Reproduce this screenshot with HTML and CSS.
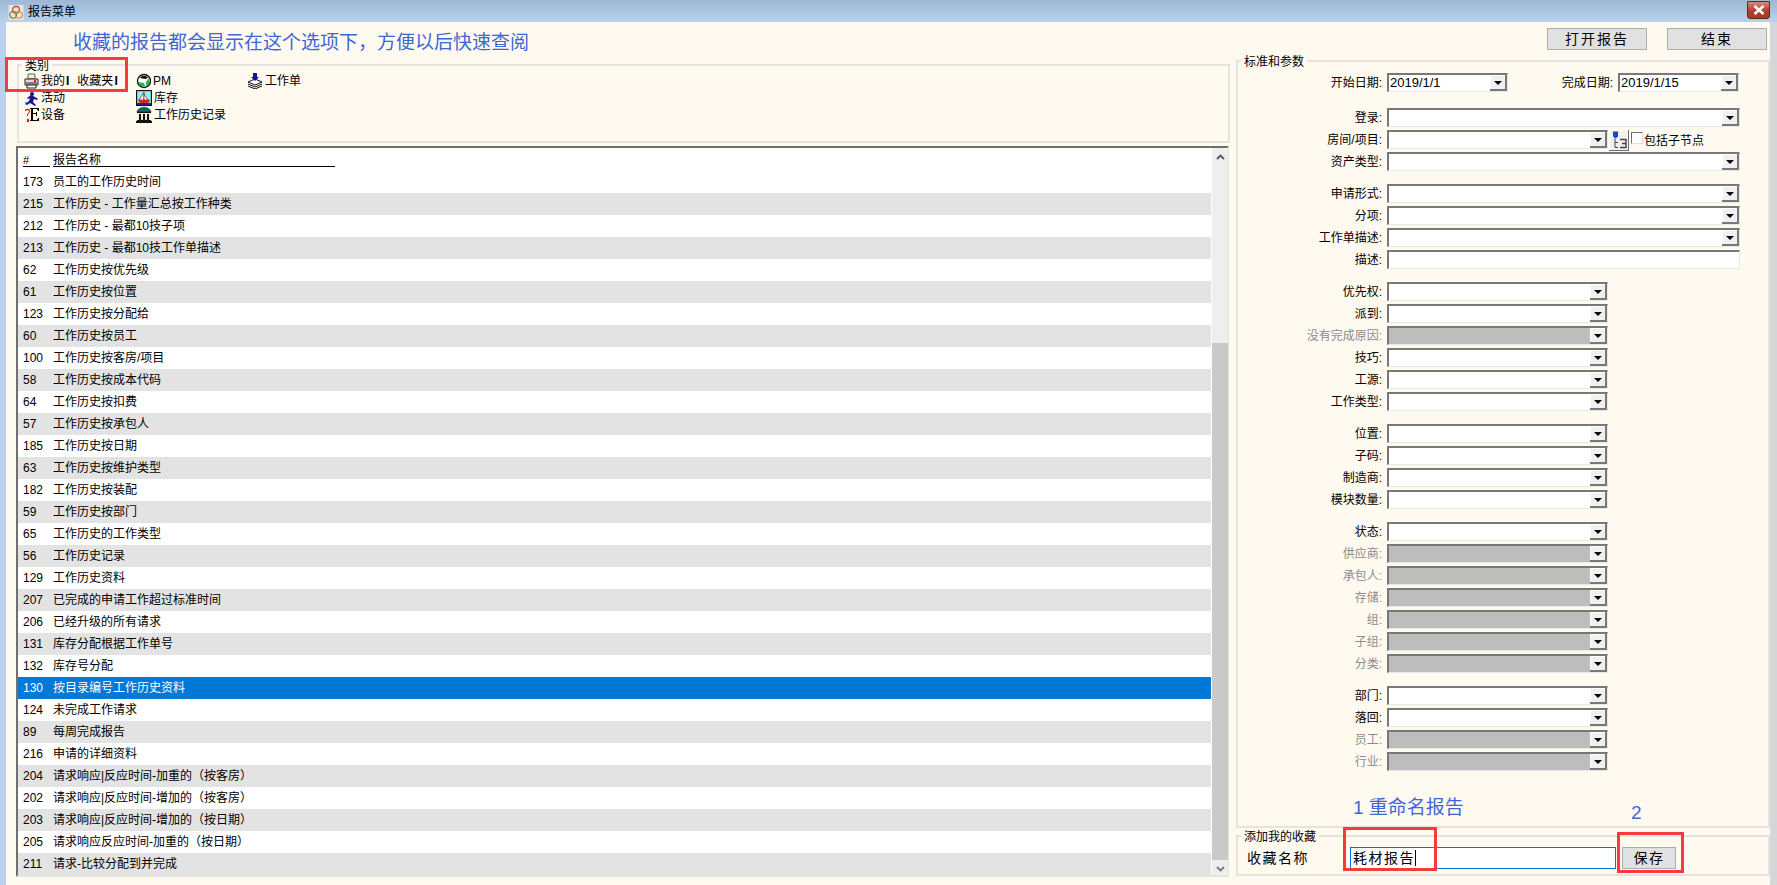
FILE: index.html
```html
<!DOCTYPE html>
<html lang="zh-CN">
<head>
<meta charset="utf-8">
<title>报告菜单</title>
<link rel="stylesheet" href="styles.css">
</head>
<body>
<div class="app">
  <header class="titlebar">
    <svg class="app-icon" viewBox="0 0 16 16" width="16" height="15"><rect width="16" height="16" fill="#e8e4dc"/><circle cx="8" cy="5" r="3.6" fill="none" stroke="#c0392b" stroke-width="1.2"/><circle cx="5" cy="10.5" r="3.6" fill="none" stroke="#5a8a3a" stroke-width="1.2"/><circle cx="11" cy="10.5" r="3.6" fill="none" stroke="#c79a2b" stroke-width="1.2"/></svg>
    <span class="title-text">报告菜单</span>
    <span class="close-btn"><svg viewBox="0 0 12 10" width="12" height="10"><path d="M1.5 1 L10.5 9 M10.5 1 L1.5 9" stroke="#fff" stroke-width="2.6"/></svg></span>
  </header>
  <div class="window">
    <main class="content">
      <section class="left">
        <fieldset class="box category">
          <legend>类别</legend>
          <div class="cat-grid">
            <div class="cat-item"><svg class="ico" viewBox="0 0 15 16"><path d="M4 1h7v5H4z" fill="#f2efc8" stroke="#666"/><path d="M1 6h13v6H1z" fill="#ddd" stroke="#222"/><path d="M3 12h9v3H3z" fill="#fff" stroke="#222"/><rect x="10" y="7" width="2" height="2" fill="#e11"/><path d="M2 10h11" stroke="#222"/></svg><span>我的<b class="bar">I</b><span class="favname">收藏夹</span><b class="bar">I</b></span></div>
            <div class="cat-item"><svg class="ico" viewBox="0 0 15 16"><path d="M6 0h5v2H6z" fill="#b11"/><circle cx="8" cy="4" r="2" fill="#14148c"/><path d="M3 8l4-3 4 2 3 2-1 1-3-1-1 3 3 3-1 1-5-3-3 2-2-1 4-3 1-3-2 1z" fill="#14148c"/><path d="M1 12h3v1H1z" fill="#2a8ad4"/></svg><span>活动</span></div>
            <div class="cat-item"><svg class="ico" viewBox="0 0 15 16"><path d="M6 1h9v3h-1l-1-2H9v4h3V5h1v4h-1V7H9v6h4l1-2h1v3H6v-1h1V2H6z" fill="#000"/><path d="M1 4c0-3 5-3 5 0 0 2-2 2-2 5H3c0-3 2-3 2-5 0-1-3-1-3 0z" fill="#e01010"/><rect x="3" y="12" width="2" height="3" fill="#e01010"/></svg><span>设备</span></div>
            <div class="cat-item"><svg class="ico" viewBox="0 0 15 16"><circle cx="8" cy="8" r="6.5" fill="#fff" stroke="#111" stroke-width="1.4"/><path d="M4 5c2-3 6-3 8 0l-3 1z" fill="#111"/><path d="M2 9l3 4 4 0-1-3z" fill="#19b84a"/><path d="M13 5l1 5-4 3 0-4z" fill="#19b84a"/></svg><span class="latin">PM</span></div>
            <div class="cat-item"><svg class="ico wide" viewBox="0 0 16 16"><rect x=".5" y=".5" width="15" height="15" fill="#5fd3d8" stroke="#111"/><path d="M2 2h12v7H2z" fill="#a6e8ea"/><path d="M8 2v8H3z" fill="#fff" stroke="#111" stroke-width=".6"/><path d="M8 4l4 6H8z" fill="#fff" stroke="#111" stroke-width=".6"/><path d="M2 10h12l-2 3H4z" fill="#d22"/><path d="M1 13h14v2H1z" fill="#1a2a9c"/></svg><span>库存</span></div>
            <div class="cat-item"><svg class="ico wide" viewBox="0 0 16 16"><path d="M1 5c1-6 13-6 14 0z" fill="#0f6a6a" stroke="#111" stroke-width=".6"/><path d="M1 5h14v1H1zM1 13h14v1H1zM0 14h16v2H0z" fill="#111"/><path d="M2 6h12v7H2z" fill="#f4f0d0"/><path d="M3 7h2v6H3zM7 7h2v6H7zM11 7h2v6h-2z" fill="#111"/></svg><span>工作历史记录</span></div>
            <div class="cat-item"><svg class="ico wide" viewBox="0 0 16 16"><path d="M8 6l7 3-7 3-7-3z" fill="#fff" stroke="#111"/><path d="M1 11l7 3 7-3M1 13l7 3 7-3" fill="none" stroke="#111"/><path d="M6 0h4v4h2l-4 4-4-4h2z" fill="#14148c"/></svg><span>工作单</span></div>
          </div>
        </fieldset>
        <div class="list">
          <div class="list-body">
            <div class="list-head"><span class="head-num">#</span><span class="head-name">报告名称</span></div>
            <div class="row"><span class="num">173</span><span>员工的工作历史时间</span></div>
            <div class="row alt"><span class="num">215</span><span>工作历史 - 工作量汇总按工作种类</span></div>
            <div class="row"><span class="num">212</span><span>工作历史 - 最都10技子项</span></div>
            <div class="row alt"><span class="num">213</span><span>工作历史 - 最都10技工作单描述</span></div>
            <div class="row"><span class="num">62</span><span>工作历史按优先级</span></div>
            <div class="row alt"><span class="num">61</span><span>工作历史按位置</span></div>
            <div class="row"><span class="num">123</span><span>工作历史按分配给</span></div>
            <div class="row alt"><span class="num">60</span><span>工作历史按员工</span></div>
            <div class="row"><span class="num">100</span><span>工作历史按客房/项目</span></div>
            <div class="row alt"><span class="num">58</span><span>工作历史按成本代码</span></div>
            <div class="row"><span class="num">64</span><span>工作历史按扣费</span></div>
            <div class="row alt"><span class="num">57</span><span>工作历史按承包人</span></div>
            <div class="row"><span class="num">185</span><span>工作历史按日期</span></div>
            <div class="row alt"><span class="num">63</span><span>工作历史按维护类型</span></div>
            <div class="row"><span class="num">182</span><span>工作历史按装配</span></div>
            <div class="row alt"><span class="num">59</span><span>工作历史按部门</span></div>
            <div class="row"><span class="num">65</span><span>工作历史的工作类型</span></div>
            <div class="row alt"><span class="num">56</span><span>工作历史记录</span></div>
            <div class="row"><span class="num">129</span><span>工作历史资料</span></div>
            <div class="row alt"><span class="num">207</span><span>已完成的申请工作超过标准时间</span></div>
            <div class="row"><span class="num">206</span><span>已经升级的所有请求</span></div>
            <div class="row alt"><span class="num">131</span><span>库存分配根据工作单号</span></div>
            <div class="row"><span class="num">132</span><span>库存号分配</span></div>
            <div class="row selected"><span class="num">130</span><span>按目录编号工作历史资料</span></div>
            <div class="row"><span class="num">124</span><span>未完成工作请求</span></div>
            <div class="row alt"><span class="num">89</span><span>每周完成报告</span></div>
            <div class="row"><span class="num">216</span><span>申请的详细资料</span></div>
            <div class="row alt"><span class="num">204</span><span>请求响应|反应时间-加重的（按客房）</span></div>
            <div class="row"><span class="num">202</span><span>请求响应|反应时间-增加的（按客房）</span></div>
            <div class="row alt"><span class="num">203</span><span>请求响应|反应时间-增加的（按日期）</span></div>
            <div class="row"><span class="num">205</span><span>请求响应反应时间-加重的（按日期）</span></div>
            <div class="row alt"><span class="num">211</span><span>请求-比较分配到并完成</span></div>
          </div>
          <div class="scrollbar">
            <div class="scroll-btn"><svg viewBox="0 0 9 6" width="9" height="6"><path d="M1 5l3.5-3.500L8 5" fill="none" stroke="#555" stroke-width="1.8"/></svg></div>
            <div class="scroll-gap"></div>
            <div class="scroll-thumb"></div>
            <div class="scroll-btn end"><svg viewBox="0 0 9 6" width="9" height="6"><path d="M1 1l3.500 3.500L8 1" fill="none" stroke="#777" stroke-width="1.8"/></svg></div>
          </div>
        </div>
      </section>

      <section class="right">
        <div class="actions">
          <button class="btn">打开报告</button>
          <button class="btn">结束</button>
        </div>
        <fieldset class="box params">
          <legend>标准和参数</legend>
          <div class="group first">
            <div class="frow">
              <label class="lbl">开始日期:</label>
              <div class="field date"><span class="val">2019/1/1</span><span class="arrow"></span></div>
              <label class="lbl short">完成日期:</label>
              <div class="field date"><span class="val">2019/1/15</span><span class="arrow"></span></div>
            </div>
          </div>
          <div class="group">
            <div class="frow"><label class="lbl">登录:</label><div class="field long"><span class="val"></span><span class="arrow"></span></div></div>
            <div class="frow"><label class="lbl">房间/项目:</label><div class="field"><span class="val"></span><span class="arrow"></span></div>
              <span class="tree-btn"><svg viewBox="0 0 18 18" width="18" height="19"><path d="M3 0h5v5l-2.500 2L3 5z" fill="#2040d0"/><path d="M5 7v9h3M5 11h3" fill="none" stroke="#444"/><path d="M10 8h6v8h-6M12 12h4" fill="none" stroke="#444" stroke-width="1.400"/></svg></span>
              <span class="check"></span><span class="check-text">包括子节点</span>
            </div>
            <div class="frow"><label class="lbl">资产类型:</label><div class="field long"><span class="val"></span><span class="arrow"></span></div></div>
          </div>
          <div class="group">
            <div class="frow"><label class="lbl">申请形式:</label><div class="field long"><span class="val"></span><span class="arrow"></span></div></div>
            <div class="frow"><label class="lbl">分项:</label><div class="field long"><span class="val"></span><span class="arrow"></span></div></div>
            <div class="frow"><label class="lbl">工作单描述:</label><div class="field long"><span class="val"></span><span class="arrow"></span></div></div>
            <div class="frow"><label class="lbl">描述:</label><div class="field long"><span class="val"></span></div></div>
          </div>
          <div class="group">
            <div class="frow"><label class="lbl">优先权:</label><div class="field"><span class="val"></span><span class="arrow"></span></div></div>
            <div class="frow"><label class="lbl">派到:</label><div class="field"><span class="val"></span><span class="arrow"></span></div></div>
            <div class="frow off"><label class="lbl">没有完成原因:</label><div class="field"><span class="val"></span><span class="arrow"></span></div></div>
            <div class="frow"><label class="lbl">技巧:</label><div class="field"><span class="val"></span><span class="arrow"></span></div></div>
            <div class="frow"><label class="lbl">工源:</label><div class="field"><span class="val"></span><span class="arrow"></span></div></div>
            <div class="frow"><label class="lbl">工作类型:</label><div class="field"><span class="val"></span><span class="arrow"></span></div></div>
          </div>
          <div class="group">
            <div class="frow"><label class="lbl">位置:</label><div class="field"><span class="val"></span><span class="arrow"></span></div></div>
            <div class="frow"><label class="lbl">子码:</label><div class="field"><span class="val"></span><span class="arrow"></span></div></div>
            <div class="frow"><label class="lbl">制造商:</label><div class="field"><span class="val"></span><span class="arrow"></span></div></div>
            <div class="frow"><label class="lbl">模块数量:</label><div class="field"><span class="val"></span><span class="arrow"></span></div></div>
          </div>
          <div class="group">
            <div class="frow"><label class="lbl">状态:</label><div class="field"><span class="val"></span><span class="arrow"></span></div></div>
            <div class="frow off"><label class="lbl">供应商:</label><div class="field"><span class="val"></span><span class="arrow"></span></div></div>
            <div class="frow off"><label class="lbl">承包人:</label><div class="field"><span class="val"></span><span class="arrow"></span></div></div>
            <div class="frow off"><label class="lbl">存储:</label><div class="field"><span class="val"></span><span class="arrow"></span></div></div>
            <div class="frow off"><label class="lbl">组:</label><div class="field"><span class="val"></span><span class="arrow"></span></div></div>
            <div class="frow off"><label class="lbl">子组:</label><div class="field"><span class="val"></span><span class="arrow"></span></div></div>
            <div class="frow off"><label class="lbl">分类:</label><div class="field"><span class="val"></span><span class="arrow"></span></div></div>
          </div>
          <div class="group">
            <div class="frow"><label class="lbl">部门:</label><div class="field"><span class="val"></span><span class="arrow"></span></div></div>
            <div class="frow"><label class="lbl">落回:</label><div class="field"><span class="val"></span><span class="arrow"></span></div></div>
            <div class="frow off"><label class="lbl">员工:</label><div class="field"><span class="val"></span><span class="arrow"></span></div></div>
            <div class="frow off"><label class="lbl">行业:</label><div class="field"><span class="val"></span><span class="arrow"></span></div></div>
          </div>
        </fieldset>
        <fieldset class="box favorite">
          <legend>添加我的收藏</legend>
          <div class="fav-row">
            <span class="fav-label">收藏名称</span>
            <div class="fav-input"><span class="caret">耗材报告</span></div>
            <button class="btn save">保存</button>
          </div>
        </fieldset>
      </section>
    </main>
    <div class="edge"></div>
  </div>

  <p class="note note-top">收藏的报告都会显示在这个选项下，方便以后快速查阅</p>
  <p class="note note-rename">1 重命名报告</p>
  <p class="note note-two">2</p>
  <div class="mark mark-cat"></div>
  <div class="mark mark-input"></div>
  <div class="mark mark-save"></div>
</div>
</body>
</html>
```
FILE: styles.css
```css
* { box-sizing: border-box; }
html, body { margin: 0; padding: 0; }
body {
  width: 1777px;
  height: 885px;
  overflow: hidden;
  font-family: "Liberation Sans", "Noto Sans CJK SC", sans-serif;
  font-size: 12px;
  color: #000;
  background: #b9d1ea;
}
.app { position: relative; width: 1777px; height: 885px; display: flex; flex-direction: column; }

.titlebar {
  height: 22px;
  flex: none;
  display: flex;
  align-items: center;
  padding-left: 8px;
  padding-right: 7px;
  background: linear-gradient(#9db8d4, #b9d2ec);
}
.app-icon { flex: none; margin-top: 2px; }
.title-text { margin-left: 4px; font-size: 12px; line-height: 14px; margin-top: 2px; }
.close-btn {
  margin-left: auto;
  width: 23px;
  height: 18px;
  align-self: flex-start;
  margin-top: 1px;
  background: linear-gradient(#d58a7c, #b0402f 55%, #a73a2a);
  border: 1px solid #5c2a25;
  border-radius: 0 0 3px 3px;
  display: flex;
  align-items: center;
  justify-content: center;
}

.window { flex: 1; display: flex; padding-left: 6px; min-height: 0; }
.content { width: 1764px; background: #fffaf0; display: flex; }
.edge { flex: 1; background: #d4d6d8; }

.left { width: 1213px; margin-left: 10px; padding-top: 36px; flex: none; }
.right { width: 534px; margin-left: 7px; flex: none; padding-top: 6px; }

.box {
  margin: 0;
  padding: 0;
  border: 2px solid #e5e3dd;
  min-width: 0;
}
.box legend {
  position: relative;
  top: 1px;
  padding: 0 3px;
  margin-left: 3px;
  font-size: 12px;
  line-height: 14px;
}

.category { height: 85px; margin-left: 1px; margin-right: -1px; width: 1213px; }
.cat-grid {
  display: grid;
  grid-template-rows: repeat(3, 17px);
  grid-auto-flow: column;
  grid-template-columns: 112px 111px 1fr;
  padding-left: 5px;
}
.cat-item { display: flex; align-items: center; line-height: 14px; white-space: pre; }
.ico { width: 15px; height: 16px; margin-right: 2px; flex: none; }
.ico.wide { width: 16px; margin-right: 2px; }
.bar { font-weight: bold; margin-left: 1px; }
.favname { margin-left: 8px; }
.latin { font-size: 12px; }

.list {
  margin-top: 3px;
  width: 1213px;
  height: 731px;
  display: flex;
  border-top: 2px solid #707070;
  border-left: 2px solid #707070;
  border-right: 2px solid #e4e4e4;
  border-bottom: 2px solid #e4e4e4;
  background: #fff;
}
.list-body { width: 1193px; flex: none; overflow: hidden; }
.list-head { height: 23px; display: flex; padding: 2px 0 0 5px; align-items: flex-start; }
.head-num { width: 27px; height: 17px; border-bottom: 1px solid #000; line-height: 20px; font-size: 11px; }
.head-name { margin-left: 3px; width: 282px; height: 17px; border-bottom: 1px solid #000; line-height: 20px; }
.row { height: 22px; display: flex; align-items: center; padding-left: 5px; white-space: nowrap; line-height: 14px; }
.row.alt { background: #e3e3e3; }
.row.selected { background: #0078d7; color: #fff; }
.num { width: 30px; flex: none; }

.scrollbar {
  width: 16px;
  margin-left: 1px;
  flex: none;
  background: #eeeeee;
  display: flex;
  flex-direction: column;
}
.scroll-btn { height: 17px; display: flex; align-items: center; justify-content: center; flex: none; }
.scroll-btn.end { flex: 1; align-items: flex-end; padding-bottom: 3px; }
.scroll-gap { height: 178px; flex: none; }
.scroll-thumb { height: 517px; flex: none; background: #c9c9c9; }

.actions { display: flex; justify-content: flex-end; gap: 20px; height: 22px; padding-right: 3px; }
.btn {
  width: 100px;
  height: 22px;
  padding: 0;
  background: #e1e1e1;
  border: 1px solid #adadad;
  font-family: inherit;
  font-size: 14px;
  letter-spacing: 2px;
  line-height: 18px;
  color: #000;
}
.params { height: 774px; margin-top: 4px; }
.group { padding-bottom: 10px; }
.group.first { padding-top: 5px; padding-bottom: 13px; }
.frow { display: flex; height: 19px; margin-bottom: 3px; align-items: center; }
.lbl { width: 144px; text-align: right; margin-right: 5px; flex: none; line-height: 14px; }
.lbl.short { width: 105px; }
.field {
  width: 221px;
  height: 19px;
  flex: none;
  display: flex;
  background: #fff;
  border-top: 2px solid #787878;
  border-left: 2px solid #787878;
  border-right: 1px solid #e8e8e8;
  border-bottom: 1px solid #e8e8e8;
}
.field.long { width: 353px; }
.field.date { width: 121px; }
.val { flex: 1; line-height: 16px; color: #000; font-size: 13px; padding-left: 1px; }
.arrow {
  width: 17px;
  flex: none;
  background: #f0f0f0;
  box-shadow: inset -2px -2px 0 #787878, inset 1px 1px 0 #fff;
  position: relative;
}
.arrow::after {
  content: "";
  position: absolute;
  left: 4px;
  top: 6px;
  border-top: 4px solid #000;
  border-left: 4px solid transparent;
  border-right: 4px solid transparent;
}
.off .lbl { color: #8c8c8c; }
.off .field, .off .val { background: #bdbdbd; }
.tree-btn {
  width: 20px;
  height: 21px;
  margin-left: 1px;
  align-self: flex-start;
  flex: none;
  background: #f0f0f0;
  box-shadow: inset -1px -1px 0 #707070, inset 1px 1px 0 #fff;
  display: flex;
  align-items: center;
  justify-content: center;
}
.check {
  width: 12px;
  height: 12px;
  margin-left: 2px;
  margin-top: -3px;
  flex: none;
  background: #fff;
  border-top: 1px solid #707070;
  border-left: 1px solid #707070;
  border-right: 1px solid #e0e0e0;
  border-bottom: 1px solid #e0e0e0;
}
.check-text { margin-left: 1px; line-height: 14px; margin-top: 2px; }

.favorite { height: 47px; margin-top: 1px; }
.fav-row { display: flex; padding: 4px 0 0 9px; align-items: flex-start; }
.fav-label { width: 103px; font-size: 14px; letter-spacing: 1.500px; line-height: 22px; flex: none; }
.fav-input {
  width: 266px;
  height: 22px;
  flex: none;
  background: #fff;
  border: 1px solid #0078d7;
  padding-left: 2px;
  font-size: 14px;
  letter-spacing: 1.500px;
  line-height: 20px;
}
.caret { border-right: 1px solid #000; }
.btn.save { width: 54px; margin-left: 6px; letter-spacing: 1.500px; }

.note { position: absolute; margin: 0; color: #3f66d6; font-size: 19px; line-height: 22px; white-space: nowrap; }
.note-top { left: 73px; top: 32px; }
.note-rename { left: 1353px; top: 797px; }
.note-two { left: 1631px; top: 802px; }
.mark { position: absolute; border: 3px solid #f83a3a; }
.mark-cat { left: 5px; top: 57px; width: 123px; height: 35px; }
.mark-input { left: 1343px; top: 827px; width: 94px; height: 44px; }
.mark-save { left: 1617px; top: 832px; width: 67px; height: 41px; }
```
